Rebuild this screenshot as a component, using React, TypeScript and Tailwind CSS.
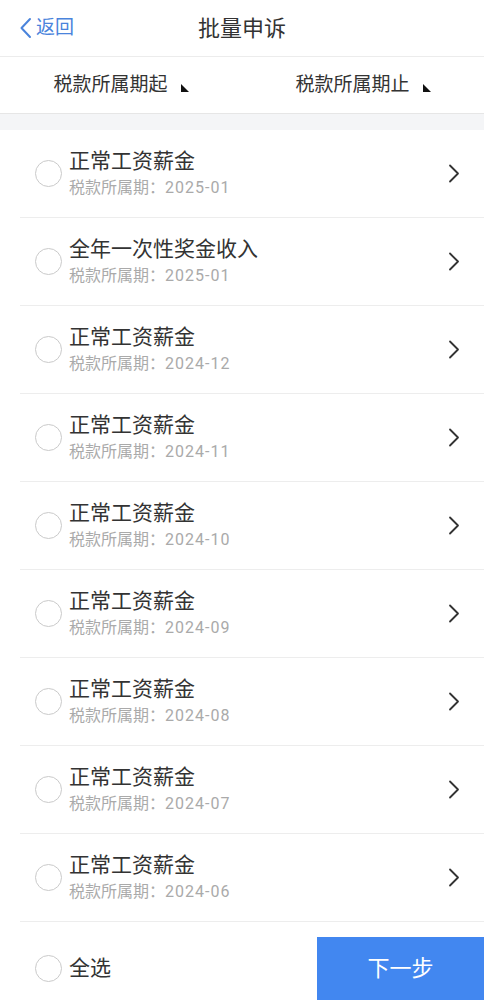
const items = [
  { title: "正常工资薪金", period: "2025-01" },
  { title: "全年一次性奖金收入", period: "2025-01" },
  { title: "正常工资薪金", period: "2024-12" },
  { title: "正常工资薪金", period: "2024-11" },
  { title: "正常工资薪金", period: "2024-10" },
  { title: "正常工资薪金", period: "2024-09" },
  { title: "正常工资薪金", period: "2024-08" },
  { title: "正常工资薪金", period: "2024-07" },
  { title: "正常工资薪金", period: "2024-06" },
];

function Radio() {
  return <span className="block w-[27px] h-[27px] rounded-full border-[1.5px] border-[#cacaca] shrink-0" />;
}

function Corner() {
  return (
    <svg width="8" height="8" viewBox="0 0 8 8" className="ml-[13px] mt-[6px]">
      <path d="M0 0 L8 8 L0 8 Z" fill="#111" />
    </svg>
  );
}

function Chevron() {
  return (
    <svg width="12" height="19" viewBox="0 0 12 19" fill="none">
      <path d="M2 1.5 L10 9.5 L2 17.5" stroke="#333" strokeWidth="1.8" strokeLinecap="round" strokeLinejoin="round" />
    </svg>
  );
}

export default function App() {
  return (
    <div
      className="w-[484px] h-[1000px] bg-white flex flex-col overflow-hidden text-[#333]"
      style={{ fontFamily: 'Roboto, "Noto Sans CJK SC", sans-serif' }}
    >
      {/* Header */}
      <div className="h-[57px] shrink-0 relative flex items-center justify-center border-b border-[#ececec]">
        <div className="absolute left-[19px] top-0 h-full flex items-center text-[#4a84dc]">
          <svg width="13" height="22" viewBox="0 0 13 22" fill="none">
            <path d="M11 2 L2.5 11 L11 20" stroke="#4a84dc" strokeWidth="2" strokeLinecap="round" strokeLinejoin="round" />
          </svg>
          <span className="ml-[4px] text-[19px]">返回</span>
        </div>
        <span className="text-[22px]">批量申诉</span>
      </div>

      {/* Filters */}
      <div className="h-[57px] shrink-0 grid grid-cols-2 border-b border-[#e6e6e6]">
        <div className="flex items-center justify-center text-[19px]">
          税款所属期起
          <Corner />
        </div>
        <div className="flex items-center justify-center text-[19px]">
          税款所属期止
          <Corner />
        </div>
      </div>

      <div className="h-[16px] shrink-0 bg-[#f4f5f7]" />

      {/* List */}
      <div className="flex flex-col">
        {items.map((it, i) => (
          <div key={i} className="h-[88px] ml-5 flex items-center border-b border-[#ededed] pr-[24px]">
            <div className="ml-[15px]">
              <Radio />
            </div>
            <div className="ml-[7px] flex-1 flex flex-col">
              <span className="text-[21px] leading-[27px]">{it.title}</span>
              <span className="text-[16px] leading-[22px] mt-[2px] text-[#aaaaaa]">
                税款所属期：<span className="tracking-[1px]">{it.period}</span>
              </span>
            </div>
            <Chevron />
          </div>
        ))}
      </div>

      {/* Footer */}
      <div className="flex pt-[15px] flex-1">
        <div className="flex-1 flex items-center h-[63px] pl-[35px]">
          <Radio />
          <span className="ml-[7px] text-[21px]">全选</span>
        </div>
        <div className="w-[167px] h-[63px] bg-[#4287f0] text-white text-[22px] flex items-center justify-center">
          下一步
        </div>
      </div>
    </div>
  );
}
